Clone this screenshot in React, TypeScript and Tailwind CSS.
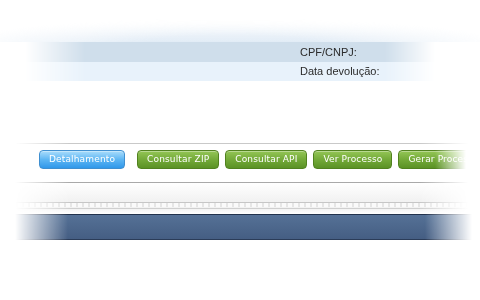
import React from "react";

const fadeRows =
  "[mask-image:linear-gradient(to_right,transparent_25px,black_85px,black_385px,transparent_435px)]";
const fadeLine =
  "[mask-image:linear-gradient(to_right,transparent_15px,black_70px,black_420px,transparent_468px)]";
const fadeBar =
  "[mask-image:linear-gradient(to_right,transparent_15px,black_68px,black_425px,transparent_472px)]";

function Btn({ label, blue }: { label: string; blue?: boolean }) {
  return (
    <button
      className={
        "h-[19px] px-[9px] rounded-[4px] border text-white text-[9px] tracking-[0.15px] leading-none whitespace-nowrap font-['DejaVu_Sans',sans-serif] shadow-[inset_0_1px_0_rgba(255,255,255,0.35)] " +
        (blue
          ? "border-[#3f8fd0] bg-gradient-to-b from-[#a9ddfb] via-[#5db6f3] to-[#2f98ea]"
          : "border-[#51821f] bg-gradient-to-b from-[#94c656] via-[#74aa39] to-[#5b9225]")
      }
    >
      {label}
    </button>
  );
}

export default function App() {
  return (
    <div className="w-[480px] h-[300px] bg-white overflow-hidden flex flex-col font-['Liberation_Sans',Arial,sans-serif] text-[#2b2b2b]">
      {/* top glow */}
      <div className="h-[18px]" />
      <div className="h-[24px] bg-gradient-to-b from-transparent to-[#e2ecf6] [mask-image:radial-gradient(ellipse_55%_100%_at_48%_100%,black_30%,transparent_100%)]" />

      <div className={fadeRows}>
        <div className="h-[20px] bg-[#cfdeeb] flex items-center pl-[300px] text-[11px]">
          CPF/CNPJ:
        </div>
        <div className="h-[19px] bg-[#e8f2fb] flex items-center pl-[300px] text-[11px]">
          Data devolução:
        </div>
      </div>

      <div className="h-[62px]" />
      <div className={"h-px bg-[#c9c9c9] " + fadeLine} />

      <div className="h-[6px]" />
      <div
        className="flex gap-[6px] pl-[39px] [mask-image:linear-gradient(to_right,black_435px,transparent_466px)]"
      >
        <div className="mr-[6px] flex">
          <Btn label="Detalhamento" blue />
        </div>
        <Btn label="Consultar ZIP" />
        <Btn label="Consultar API" />
        <Btn label="Ver Processo" />
        <Btn label="Gerar Processo" />
      </div>

      <div className="h-[13px]" />
      <div className={"h-px bg-[#a9a9a9] " + fadeLine} />
      <div className={"h-[19px] bg-gradient-to-b from-white to-[#f1f1f1] " + fadeLine} />
      <div className={fadeLine}>
        <div className="h-px bg-[#c6c6c6]" />
        <div className="h-[4px] bg-[#e9e9e9] bg-[repeating-linear-gradient(to_right,#fafafa_0px,#fafafa_4px,#e6e6e6_4px,#e6e6e6_6px)]" />
        <div className="h-px bg-[#f2f2f2]" />
        <div className="h-px bg-[#cfcfcf]" />
        <div className="h-[5px] bg-gradient-to-b from-[#f3f3f3] to-white" />
      </div>
      <div
        className={
          "h-[26px] border-t border-b border-t-[#22324c] border-b-[#2b3c58] bg-gradient-to-b from-[#557196] to-[#455e83] " +
          fadeBar
        }
      />
    </div>
  );
}
